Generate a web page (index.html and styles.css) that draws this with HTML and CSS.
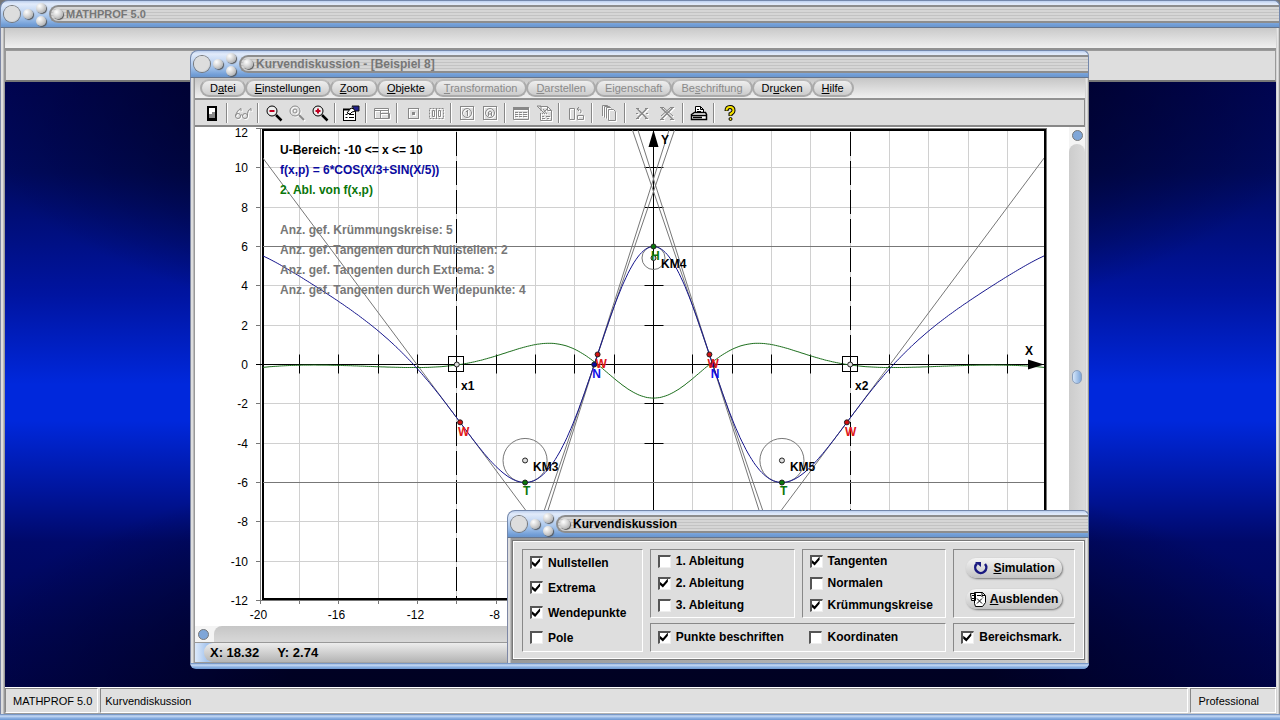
FILE: index.html
```html
<!DOCTYPE html>
<html lang="de">
<head>
  <meta charset="UTF-8">
  <meta name="viewport" content="width=device-width, initial-scale=1.0">
  <title>MATHPROF 5.0</title>
  <link rel="stylesheet" href="styles.css">
</head>
<body>

<div class="app">
  <div class="titlebar">
    <button class="ball big" aria-label="Schließen"></button>
    <button class="ball" aria-label="Minimieren"></button>
    <div class="pair">
      <button class="ball" aria-label="Maximieren"></button>
      <button class="ball" aria-label="Einrollen"></button>
    </div>
    <div class="caption"><span class="ball"></span>MATHPROF 5.0</div>
  </div>
  <div class="frame">
    <div class="app-menu"></div>
    <div class="app-tools"></div>
    <div class="desktop"></div>
    <div class="app-status">
      <span>MATHPROF 5.0</span>
      <span class="fill">Kurvendiskussion</span>
      <span>Professional</span>
    </div>
  </div>
</div>

<div class="window main">
  <div class="titlebar">
    <button class="ball big" aria-label="Schließen"></button>
    <button class="ball" aria-label="Minimieren"></button>
    <div class="pair">
      <button class="ball" aria-label="Maximieren"></button>
      <button class="ball" aria-label="Einrollen"></button>
    </div>
    <h1 class="caption wide"><span class="ball"></span>Kurvendiskussion - [Beispiel 8]</h1>
  </div>
  <div class="frame">
    <nav class="menu">
      <button>D<u>a</u>tei</button>
      <button><u>E</u>instellungen</button>
      <button><u>Z</u>oom</button>
      <button><u>O</u>bjekte</button>
      <button disabled><u>T</u>ransformation</button>
      <button disabled><u>D</u>arstellen</button>
      <button disabled>Ei<u>g</u>enschaft</button>
      <button disabled>Be<u>s</u>chriftung</button>
      <button>Dr<u>u</u>cken</button>
      <button><u>H</u>ilfe</button>
    </nav>

    <div class="toolbar">
      <div class="group">
        <button aria-label="Beenden"><svg viewBox="0 0 18 18" stroke="none"><path d="M4 2h10v15H4z" fill="#000" stroke="none"/><path d="M6 4h6v6H6z" fill="#fff" stroke="none"/><path d="M6 10h3V8h3v6H6z" fill="#888" stroke="none"/></svg></button>
      </div>
      <div class="group">
        <button aria-label="Ansicht" disabled><svg viewBox="0 0 18 18"><circle cx="4" cy="12" r="2.5"/><circle cx="11" cy="12" r="2.5"/><path d="M6.500 11.500q1-1.500 2 0M1.500 12Q3 6 7 4.500V7M13.500 12Q13 6 17 4.500V7"/></svg></button>
      </div>
      <div class="group">
        <button aria-label="Verkleinern"><svg viewBox="0 0 18 18"><circle cx="7" cy="7" r="5" fill="#eee"/><path d="M4.500 7h5" stroke="#c00020" stroke-width="2"/><path d="M11 11l5.500 5.500" stroke-width="2.500"/></svg></button>
        <button aria-label="Zoom zurück" disabled><svg viewBox="0 0 18 18"><circle cx="7" cy="7" r="5"/><circle cx="7" cy="7" r="2"/><path d="M11 11l5 5" stroke-width="2"/></svg></button>
        <button aria-label="Vergrößern"><svg viewBox="0 0 18 18"><circle cx="7" cy="7" r="5" fill="#eee"/><path d="M4.500 7h5M7 4.500v5" stroke="#c00020" stroke-width="2"/><path d="M11 11l5.500 5.500" stroke-width="2.500"/></svg></button>
      </div>
      <div class="group">
        <button aria-label="Eigenschaften"><svg viewBox="0 0 18 18"><rect x="1.500" y="5.500" width="12" height="11" fill="#fff"/><path d="M1 5.500h13" stroke-width="2"/><path d="M3.500 10.500h2M3.500 13.500h2M7 10.500h5M7 13.500h5"/><path d="M5 9l4-5 3 1 2-1v3l-4 1-2 2z" fill="#fff"/><path d="M10 2h7v5h-4z" fill="#20208a" stroke="#111"/></svg></button>
      </div>
      <div class="group">
        <button aria-label="Fenster" disabled><svg viewBox="0 0 18 18"><path d="M1.500 4.500h14v10h-14zM1.500 6.500h14M7.500 6.500v8M7.500 9.500h9v5h-9"/></svg></button>
      </div>
      <div class="group">
        <button aria-label="Punkt" disabled><svg viewBox="0 0 18 18"><rect x="4.500" y="4.500" width="10" height="10"/><path d="M8 9.500h3" stroke-width="3"/></svg></button>
        <button aria-label="Punktpaar" disabled><svg viewBox="0 0 18 18"><path d="M2.500 4.500h14v10h-14z" stroke-dasharray="2 1"/><path d="M5.500 6.500h2v6h-2zM11.500 6.500h2v6h-2zM9.500 4v11"/></svg></button>
      </div>
      <div class="group">
        <button aria-label="Tangente" disabled><svg viewBox="0 0 18 18"><rect x="2.500" y="2.500" width="13" height="13"/><circle cx="9" cy="9" r="4.500"/><path d="M9.500 6v6M8 7.500h1"/></svg></button>
        <button aria-label="Normale" disabled><svg viewBox="0 0 18 18"><rect x="2.500" y="2.500" width="13" height="13"/><circle cx="9" cy="9" r="4.500"/><path d="M7.500 12V8q1.500-2 3 0v4M7 10h4"/></svg></button>
      </div>
      <div class="group">
        <button aria-label="Tabelle" disabled><svg viewBox="0 0 18 18"><path d="M1.500 3.500h15v12h-15z"/><path d="M1 4.500h16" stroke-width="3"/><path d="M3 8.500h3M7 8.500h3M11 8.500h4M3 10.500h3M7 10.500h3M11 10.500h4M3 12.500h3M7 12.500h3M11 12.500h4"/></svg></button>
        <button aria-label="Protokoll" disabled><svg viewBox="0 0 18 18"><path d="M4.500 2.500h8l4 4v10h-11V9M12.500 2.500v4h4M2 2h4v5M2 2l8 8M7 12.500h2M11 12.500h4M7 14.500h3M12 14.500h2M8 5l4 5M12 5L7 10"/></svg></button>
      </div>
      <div class="group wide">
        <button aria-label="Tauschen" disabled><svg viewBox="0 0 18 18"><path d="M2.500 4.500h5v11h-5zM10.500 11.500h6v4h-6zM13.500 9q2-4-3-4M12 3l-2 2 2 2"/></svg></button>
      </div>
      <div class="group wide">
        <button aria-label="Kopieren" disabled><svg viewBox="0 0 18 18"><path d="M2.500 12V1.500h5l1 1M4.500 13.500v-11h5l1 1M6.500 14.500v-11h4l1 1M8.500 5.500h5l2 2v9h-7z"/></svg></button>
      </div>
      <div class="group wide">
        <button aria-label="Löschen" disabled><svg viewBox="0 0 18 18"><path d="M4.500 5l9 9M13.500 5l-9 9" stroke-width="1.500"/><path d="M3 4.500h3M12 4.500h3M3 14.500h3M12 14.500h3M3 9.500h2M13 9.500h2"/></svg></button>
        <button aria-label="Alle löschen" disabled><svg viewBox="0 0 18 18"><path d="M3.500 4l11 11M14.500 4l-11 11" stroke-width="1.500"/><path d="M2 3.500h4M12 3.500h4M2 15.500h4M12 15.500h4M6 4l9 8M12 4L3 12"/></svg></button>
      </div>
      <div class="group">
        <button aria-label="Drucken"><svg viewBox="0 0 18 18"><path d="M5.500 9V2.500h5l3 3V9M10.500 2.500v3h3M7 5.500h2M7 7.500h4" fill="#fff"/><path d="M1.500 10.500l3-2h11l1 2v5h-15z" fill="#fff" stroke-width="1.500"/><path d="M1 11.500h16M3 13.500h9" stroke-width="1.500"/></svg></button>
      </div>
      <div class="group">
        <button aria-label="Hilfe"><svg viewBox="0 0 18 18"><path d="M5.500 7q0-4 3.500-4t3.500 3.500Q12.500 8.500 9.500 10v2" stroke-width="4"/><path d="M5.500 6.500q0-3.500 3.500-3.500t3.500 3.500Q12.500 8.500 9.500 10v1.500" stroke="#f5e100" stroke-width="2"/><circle cx="9.500" cy="15" r="1.500" fill="#f5e100"/></svg></button>
      </div>
    </div>

    <div class="work">
      <svg class="plot" viewBox="0 0 874 499" role="img" aria-label="Funktionsgraph">
        <defs>
          <clipPath id="area"><rect x="68" y="3" width="781" height="469"/></clipPath>
        </defs>
        <g id="grid"></g>
        <rect class="outer" x="65.500" y="1.500" width="786" height="472"/>
        <rect class="inner" x="68" y="3" width="782" height="469"/>
        <g id="axes"></g>
        <g id="curves" clip-path="url(#area)"></g>
        <g id="marks"></g>
        <path class="arrow" d="M458.500 3l5 17h-10zM849 237.500l-16-5v10z"/>
        <g class="axis-name"><text x="466" y="17">Y</text><text x="830" y="228">X</text></g>
        <g class="info">
          <text x="85" y="27">U-Bereich: -10 &lt;= x &lt;= 10</text>
          <text x="85" y="47" class="blue">f(x,p) = 6*COS(X/3+SIN(X/5))</text>
          <text x="85" y="67" class="green">2. Abl. von f(x,p)</text>
          <g class="gray">
            <text x="85" y="107">Anz. gef. Krümmungskreise: 5</text>
            <text x="85" y="127">Anz. gef. Tangenten durch Nullstellen: 2</text>
            <text x="85" y="147">Anz. gef. Tangenten durch Extrema: 3</text>
            <text x="85" y="167">Anz. gef. Tangenten durch Wendepunkte: 4</text>
          </g>
        </g>
      </svg>
      <div class="vscroll"><span class="knob"></span><div class="track"></div><span class="thumb"></span></div>
    </div>
    <div class="hscroll"><span class="knob"></span><div class="track"></div></div>
    <div class="coords"><div><span>X: 18.32</span><span>Y: 2.74</span></div></div>
  </div>
</div>

<form class="window dialog">
  <div class="titlebar">
    <button type="button" class="ball big" aria-label="Schließen"></button>
    <button type="button" class="ball" aria-label="Minimieren"></button>
    <div class="pair">
      <button type="button" class="ball" aria-label="Maximieren"></button>
      <button type="button" class="ball" aria-label="Einrollen"></button>
    </div>
    <h2 class="caption wide active"><span class="ball"></span>Kurvendiskussion</h2>
  </div>
  <div class="frame">
    <div class="options">
      <div class="box tall">
        <label><input type="checkbox" checked>Nullstellen</label>
        <label><input type="checkbox" checked>Extrema</label>
        <label><input type="checkbox" checked>Wendepunkte</label>
        <label><input type="checkbox">Pole</label>
      </div>
      <div class="box">
        <label><input type="checkbox">1. Ableitung</label>
        <label><input type="checkbox" checked>2. Ableitung</label>
        <label><input type="checkbox">3. Ableitung</label>
      </div>
      <div class="box">
        <label><input type="checkbox" checked>Tangenten</label>
        <label><input type="checkbox">Normalen</label>
        <label><input type="checkbox" checked>Krümmungskreise</label>
      </div>
      <div class="box actions">
        <button type="button"><svg viewBox="0 0 16 16"><path d="M4 3.500A5.500 5.500 0 1 0 12 4" fill="none" stroke="#1a1a80" stroke-width="2.500"/><path d="M2 2h6v5z" fill="#1a1a80"/></svg><span><u>S</u>imulation</span></button>
        <button type="button"><svg viewBox="0 0 16 16"><path d="M4.500 1.500h8l3 3v7l-3 4h-7l-1-3zM.5 2.500h5v7h-4zM2 4.500h2M2 7.500h2M7 4.500h4l2 2M7 7.500l5 5M12 7.500l-5 5M12 1.500v3h3" fill="#fff" stroke="#000"/></svg><span><u>A</u>usblenden</span></button>
      </div>
      <div class="box double">
        <label><input type="checkbox" checked>Punkte beschriften</label>
        <label><input type="checkbox">Koordinaten</label>
      </div>
      <div class="box">
        <label><input type="checkbox" checked>Bereichsmark.</label>
      </div>
    </div>
  </div>
</form>

<script src="plot.js"></script>
</body>
</html>
```
FILE: styles.css
```css
* {
  box-sizing: border-box;
}
body {
  margin: 0;
  height: 100vh;
  background: #777;
  color: #000;
  font-family: "Liberation Sans", Arial, sans-serif;
  font-size: 11px;
  overflow: hidden;
  position: relative;
}
button {
  font: inherit;
  color: inherit;
  padding: 0;
  border: none;
}
.app {
  display: flex;
  flex-direction: column;
  height: 100%;
}
.window {
  position: absolute;
  display: flex;
  flex-direction: column;
}
.main {
  left: 190px;
  top: 50px;
  width: 899px;
}
.dialog {
  left: 507px;
  top: 510px;
  width: 582px;
}

/* title bars */
.titlebar {
  display: flex;
  align-items: center;
  gap: 3px;
  height: 28px;
  flex: none;
  padding-left: 3px;
  border: 1px solid #7488ac;
  border-bottom-color: #66758d;
  border-radius: 8px 6px 0 0;
  background: linear-gradient(#bccfee 0, #e2ebfa 3px, #c3d7f3 10px, #9abce7 18px, #6f9cd6 24px, #6c96cb);
}
.ball {
  display: block;
  flex: none;
  width: 10px;
  height: 10px;
  border-radius: 50%;
  background: radial-gradient(circle at 35% 30%, #fff, #d5d5d5 45%, #999);
  box-shadow: 1px 1px 1px #555;
}
.ball.big {
  width: 16px;
  height: 16px;
  background: radial-gradient(circle at 45% 45%, #ddd 60%, #aaa);
  box-shadow: 0 0 0 1px #777;
}
.pair {
  display: flex;
  flex-direction: column;
  gap: 3px;
}
.caption {
  flex: 1;
  display: flex;
  align-items: center;
  gap: 3px;
  height: 18px;
  margin: 0;
  padding-left: 2px;
  border: 2px solid #8d8d8d;
  border-right: none;
  border-radius: 9px 0 0 9px;
  background: repeating-linear-gradient(#d6d6d6 0 2px, #c3c3c3 2px 3px);
  color: #777;
  font-size: 11px;
  font-weight: bold;
}
.caption.wide {
  font-size: 12px;
}
.caption.active {
  color: #000;
}

.frame {
  flex: 1;
  display: flex;
  flex-direction: column;
  min-height: 0;
  padding: 0 4px 7px 5px;
  background:
    linear-gradient(#5e82b8, #c9dcf6 2px, #8db1e2 4px, #6c98d2) bottom / 100% 6px no-repeat,
    linear-gradient(90deg, #7d87a5 0 1px, #ddd 1px 3px, #999 4px, #ccc calc(100% - 4px), #eee calc(100% - 2px), #777 100%);
}
.window .frame {
  border-radius: 0 0 6px 6px;
}

/* outer application window */
.app-menu {
  height: 22px;
  border-bottom: 2px solid #919191;
  background: linear-gradient(#c9c9c9, #f0f0f0);
}
.app-tools {
  height: 32px;
  border: 1px solid #999;
  border-bottom: 2px solid #777;
  background: #dedede;
}
.desktop {
  flex: 1;
  background:
    radial-gradient(ellipse 55% 45% at 50% 0, rgba(0, 0, 24, 0.8) 50%, transparent),
    radial-gradient(ellipse 55% 40% at 50% 100%, rgba(0, 0, 24, 0.8) 50%, transparent),
    linear-gradient(#00055a 0, #000a60 15%, #0014a0 35%, #0028dc 50%, #0028dc 56%, #0016a0 67%, #00096a 76%, #00044c);
}
.app-status {
  display: flex;
  gap: 2px;
  height: 26px;
  border-top: 1px solid #fff;
  background: #e0e0e0;
}
.app-status span {
  display: flex;
  align-items: center;
  padding: 0 5px 0 7px;
  border: 1px solid #888;
  border-right-color: #fff;
  border-bottom-color: #fff;
}
.app-status span:last-child {
  padding-right: 16px;
}
.app-status .fill {
  flex: 1;
  padding-left: 4px;
}

/* menu and toolbar */
.menu {
  display: flex;
  height: 22px;
  padding: 1px 0 0 6px;
  border-bottom: 2px solid #929292;
  background: linear-gradient(#c6c6c6, #f0f0f0);
}
.menu button {
  height: 18px;
  margin-left: -1px;
  padding: 0 8px;
  border: 2px solid #aaa;
  border-top-color: #bbb;
  border-radius: 9px;
  background: linear-gradient(#eee, #ccc);
}
.menu button:disabled {
  color: #8a8a8a;
}
.toolbar {
  display: flex;
  align-items: center;
  height: 27px;
  padding-left: 2px;
  border-right: 1px solid #888;
  border-bottom: 2px solid #888;
  background: #dedede;
}
.group {
  display: flex;
  padding: 0 3px;
  border-right: 1px solid #888;
  box-shadow: 1px 0 #fff;
  margin-right: 1px;
}
.group:last-child {
  border: none;
  box-shadow: none;
}
.group button {
  display: flex;
  align-items: center;
  justify-content: center;
  width: 23px;
  height: 20px;
  background: none;
}
.group.wide button {
  width: 25px;
}
.group svg {
  width: 18px;
  height: 18px;
  flex: none;
  fill: none;
  stroke: #000;
}
.group button:disabled svg {
  stroke: #888;
  filter: drop-shadow(1px 1px #fff);
}

/* drawing area */
.work {
  display: flex;
  background: #fff;
}
.plot {
  flex: 1;
  min-width: 0;
  display: block;
  font-size: 12px;
}
.plot .outer {
  fill: none;
  stroke: #777;
}
.plot .inner {
  fill: none;
  stroke: #000;
  stroke-width: 2;
}
.plot .grid-line {
  stroke: #d0d0d0;
}
.plot .tick {
  stroke: #777;
}
.plot .axis {
  stroke: #000;
}
.plot .range {
  stroke: #000;
  stroke-dasharray: 24 5;
}
.plot .arrow {
  fill: #000;
}
.plot .num-y {
  text-anchor: end;
}
.plot .num-x {
  text-anchor: middle;
}
.plot .f {
  fill: none;
  stroke: #14148c;
}
.plot .f2 {
  fill: none;
  stroke: #1c6e1c;
}
.plot .tangent,
.plot .circle {
  fill: none;
  stroke: #777;
}
.plot .dot {
  stroke: #222;
}
.plot .square {
  fill: none;
  stroke: #000;
}
.plot .mark,
.plot .info,
.axis-name {
  font-weight: bold;
}
.blue {
  fill: #0a0aa0;
}
.green {
  fill: #0a760a;
}
.gray {
  fill: #777;
}

.vscroll {
  position: relative;
  display: flex;
  flex-direction: column;
  align-items: center;
  width: 16px;
  padding-top: 3px;
  background: #f4f4f4;
}
.vscroll .track {
  flex: 1;
  width: 100%;
  margin-top: 3px;
  border-radius: 8px 8px 0 0;
  background: linear-gradient(90deg, #ccc, #dadada);
}
.knob {
  flex: none;
  width: 11px;
  height: 11px;
  border: 1px solid #777;
  border-radius: 50%;
  background: #7fa6d8;
}
.thumb {
  position: absolute;
  top: calc(50% - 7px);
  width: 10px;
  height: 14px;
  border: 1px solid #8ba0bd;
  border-radius: 5px;
  background: linear-gradient(90deg, #d5e6fa, #7da6da);
}
.hscroll {
  display: flex;
  align-items: center;
  height: 16px;
  padding-left: 3px;
  background: #f4f4f4;
}
.hscroll .track {
  flex: 1;
  height: 100%;
  margin-left: 5px;
  border-radius: 8px 0 0 0;
  background: linear-gradient(#c6c6c6, #d8d8d8);
}
.coords {
  height: 20px;
  padding-left: 9px;
  border-top: 1px solid #999;
  background: linear-gradient(90deg, #dce9fa, #a6c5ee 12px);
}
.coords div {
  display: flex;
  align-items: center;
  gap: 18px;
  height: 100%;
  padding-left: 6px;
  border-radius: 9px 0 0 9px;
  background: linear-gradient(#ededed, #b4b4b4);
  font-size: 13px;
  font-weight: bold;
}

/* dialog */
.options {
  display: grid;
  grid-template-columns: 121fr 145fr 145fr 122fr;
  grid-template-rows: 69px 29px;
  gap: 5px 7px;
  margin-top: 2px;
  padding: 8px 9px 7px;
  border: 1px solid #777;
  outline: 1px solid #fff;
  outline-offset: -2px;
  background: #dedede;
  font-size: 12px;
  font-weight: bold;
}
.dialog .frame {
  padding-bottom: 9px;
}
.box {
  display: flex;
  flex-direction: column;
  justify-content: space-around;
  min-width: 0;
  padding: 0 7px 1px;
  border: 1px solid #888;
  border-right-color: #fff;
  border-bottom-color: #fff;
}
.box.tall {
  grid-row: span 2;
}
.box.double {
  grid-column: span 2;
  display: grid;
  grid-template-columns: 1fr 1fr;
  column-gap: 23px;
  align-items: center;
}
.box label {
  display: flex;
  align-items: center;
  gap: 5px;
  white-space: nowrap;
}
.box input {
  appearance: none;
  flex: none;
  width: 13px;
  height: 13px;
  margin: 0;
  border: 2px solid #555;
  border-right: 1px solid #eee;
  border-bottom: 1px solid #eee;
  background: #fff;
}
.box input:checked::before {
  content: "";
  display: block;
  width: 9px;
  height: 9px;
  background: #000;
  clip-path: polygon(0 35%, 35% 65%, 90% 0, 90% 35%, 35% 100%, 0 70%);
}
.actions {
  align-items: stretch;
  padding: 2px 12px;
}
.actions button {
  display: flex;
  align-items: center;
  justify-content: center;
  gap: 4px;
  height: 20px;
  border-radius: 10px;
  background: linear-gradient(#f4f4f4, #c4c4c4);
  box-shadow: 1px 1px 2px #777;
}
.actions svg {
  flex: none;
  width: 16px;
  height: 16px;
}
```
FILE: plot.js
```js
const NS = 'http://www.w3.org/2000/svg';
const UNIT = 19.67;
const OX = 458.5;
const OY = 237.5;

const f = x => 6 * Math.cos(x / 3 + Math.sin(x / 5));
const d1 = x => (f(x + 0.001) - f(x - 0.001)) / 0.002;
const d2 = x => (f(x + 0.001) - 2 * f(x) + f(x - 0.001)) / 0.000001;
const px = x => OX + x * UNIT;
const py = y => OY - y * UNIT;
// crisp 1px lines
const snap = v => Math.floor(v) + 0.5;

function add(parent, tag, attrs, text) {
  const el = document.createElementNS(NS, tag);
  for (const key in attrs) el.setAttribute(key, attrs[key]);
  if (text !== undefined) el.textContent = text;
  document.getElementById(parent).appendChild(el);
}
function line(parent, cls, x1, y1, x2, y2) {
  add(parent, 'line', { class: cls, x1, y1, x2, y2 });
}
// bisection for a sign change of fn
function root(fn, a, b) {
  for (let i = 0; i < 40; i++) {
    const m = (a + b) / 2;
    if (fn(a) * fn(m) <= 0) b = m; else a = m;
  }
  return (a + b) / 2;
}
function curve(fn, cls) {
  let d = '';
  for (let x = -20; x <= 20; x += 0.1) {
    d += (d ? 'L' : 'M') + px(x).toFixed(1) + ' ' + py(fn(x)).toFixed(1);
  }
  add('curves', 'path', { class: cls, d });
}
function tangent(x, m = d1(x)) {
  const y = t => f(x) + m * (t - x);
  line('curves', 'tangent', px(-20), py(y(-20)), px(20), py(y(20)));
}
function dot(x, y, fill) {
  add('marks', 'circle', { class: 'dot', cx: px(x), cy: py(y), r: 2.5, fill });
}
function mark(x, y, text, color) {
  add('marks', 'text', { class: 'mark', x, y, fill: color }, text);
}

for (let v = -20; v <= 20; v += 2) {
  const x = snap(px(v));
  line('grid', 'grid-line', x, 3, x, 472);
  line('grid', 'tick', x, 473, x, 477);
  if (v && Math.abs(v) < 20) line('axes', 'axis', x, OY - 10, x, OY + 9);
}
for (let v = -20; v <= -8; v += 4) {
  add('grid', 'text', { class: 'num-x', x: snap(px(v)) - 2, y: 492 }, v);
}
for (let v = -12; v <= 12; v += 2) {
  const y = snap(py(v));
  line('grid', 'grid-line', 68, y, 849, y);
  line('grid', 'tick', 61, y, 66, y);
  if (v && Math.abs(v) < 12) line('axes', 'axis', OX - 9, y, OX + 10, y);
  add('grid', 'text', { class: 'num-y', x: 53, y: Math.max(y + 4, 10) }, v);
}
line('axes', 'axis', 61, OY, 849, OY);
line('axes', 'axis', OX, 3, OX, 472);
line('axes', 'range', snap(px(-10)), 5, snap(px(-10)), 472);
line('axes', 'range', snap(px(10)), 5, snap(px(10)), 472);

const zero = root(f, 2, 4);
const low = root(d1, 5, 8);
const w1 = root(d2, 2, 4);
const w2 = root(d2, 8, 9.95);

for (const s of [-1, 1]) {
  tangent(s * zero, -s * 2.92);
  tangent(s * w1, -s * 3.14);
  tangent(s * w2);
}
for (const y of [6, -6]) {
  line('curves', 'tangent', 68, snap(py(y)), 849, snap(py(y)));
}
for (const x of [-low, 0, low]) {
  const r = 1 / d2(x);
  add('curves', 'circle', { class: 'circle', cx: px(x), cy: py(f(x) + r), r: Math.abs(r) * UNIT });
  dot(x, f(x) + r, '#ddd');
  dot(x, f(x), '#0a760a');
}
curve(d2, 'f2');
curve(f, 'f');

for (const s of [-1, 1]) {
  dot(s * zero, 0, '#0a0aa0');
  dot(s * w1, f(w1), '#d01010');
  dot(s * w2, f(w2), '#d01010');
  dot(s * 10, 0, '#ddd');
  add('marks', 'rect', { class: 'square', x: snap(px(s * 10)) - 8, y: OY - 8, width: 15, height: 15 });
  mark(px(s * zero) - 2, 251, 'N', '#1010e8');
  mark(px(s * w1) - 2, 241, 'W', '#e01818');
  mark(px(s * w2) - 2, 309, 'W', '#e01818');
  mark(px(s * low) - 2, 368, 'T', '#0a760a');
}
mark(456, 133, 'H', '#0a760a');
mark(466, 141, 'KM4', '#000');
mark(px(-low) + 8, 344, 'KM3', '#000');
mark(px(low) + 8, 344, 'KM5', '#000');
mark(266, 263, 'x1', '#000');
mark(660, 263, 'x2', '#000');
```
